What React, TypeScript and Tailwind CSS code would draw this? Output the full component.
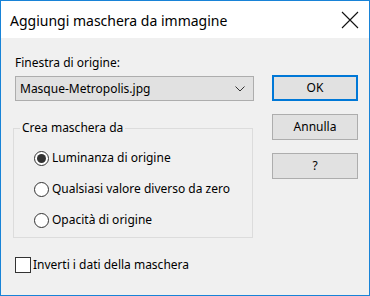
import { useState } from "react";

const font = { fontFamily: '"Noto Sans", "Open Sans", sans-serif' };

function Radio({ checked, label, onClick }: { checked: boolean; label: string; onClick: () => void }) {
  return (
    <div className="flex items-center h-[16px] cursor-default" onClick={onClick}>
      <span className="w-[15px] h-[15px] rounded-full border border-[#333333] bg-white flex items-center justify-center">
        {checked && <span className="w-[9px] h-[9px] rounded-full bg-[#333333]" />}
      </span>
      <span className="ml-[3px] text-[12px] leading-[16px] text-[#000000]">{label}</span>
    </div>
  );
}

function Button({ label, primary }: { label: string; primary?: boolean }) {
  return (
    <button
      className={`w-[86px] h-[26px] bg-[#e1e1e1] text-[12px] text-black flex items-center justify-center ${
        primary ? "border-2 border-[#0078d7]" : "border border-[#adadad]"
      }`}
    >
      {label}
    </button>
  );
}

export default function App() {
  const [mode, setMode] = useState("lum");
  const [invert, setInvert] = useState(false);

  const options = [
    { label: "Luminanza di origine", value: "lum" },
    { label: "Qualsiasi valore diverso da zero", value: "nonzero" },
    { label: "Opacità di origine", value: "opacity" },
  ];

  return (
    <div
      className="w-[370px] h-[296px] border border-[#1883d7] bg-[#f0f0f0] flex flex-col text-black"
      style={font}
    >
      {/* Title bar */}
      <div className="h-[37px] bg-white flex items-center justify-between pl-[9px] pr-[10px]">
        <span className="text-[14px] leading-[20px] mt-[2px]">Aggiungi maschera da immagine</span>
        <svg width="18" height="18" viewBox="0 0 18 18" className="mt-[1px]">
          <path d="M1 1 L17 17 M17 1 L1 17" stroke="#111" strokeWidth="1.1" fill="none" />
        </svg>
      </div>

      {/* Body */}
      <div className="flex flex-1">
        <div className="ml-[12px] w-[240px] flex flex-col">
          <div className="mt-[17px] ml-[2px] text-[12px] leading-[16px]">Finestra di origine:</div>
          <div className="mt-[5px] ml-[2px] h-[25px] w-[239px] bg-[#e1e1e1] border border-[#adadad] flex items-center justify-between pl-[4px] pr-[8px]">
            <span className="text-[12px] leading-[16px]">Masque-Metropolis.jpg</span>
            <svg width="10" height="6" viewBox="0 0 10 6">
              <path d="M0.5 0.5 L5 5 L9.5 0.5" stroke="#333" strokeWidth="1" fill="none" />
            </svg>
          </div>

          {/* Group box */}
          <fieldset className="mt-[19px] w-[240px] h-[118px] border border-[#dcdcdc] p-0">
            <legend className="ml-[6px] px-[2px] text-[12px] leading-[16px]">Crea maschera da</legend>
            <div className="flex flex-col gap-[15px] mt-[14px] pl-[20px]">
              {options.map((o) => (
                <Radio
                  key={o.value}
                  label={o.label}
                  checked={mode === o.value}
                  onClick={() => setMode(o.value)}
                />
              ))}
            </div>
          </fieldset>

          <div className="mt-[19px] ml-[2px] flex items-center cursor-default" onClick={() => setInvert(!invert)}>
            <span className="w-[16px] h-[16px] border border-[#333333] bg-white flex items-center justify-center text-[11px]">
              {invert ? "✓" : ""}
            </span>
            <span className="ml-[2px] text-[12px] leading-[16px]">Inverti i dati della maschera</span>
          </div>
        </div>

        <div className="ml-[19px] mt-[37px] flex flex-col gap-[13px]">
          <Button label="OK" primary />
          <Button label="Annulla" />
          <Button label="?" />
        </div>
      </div>
    </div>
  );
}
